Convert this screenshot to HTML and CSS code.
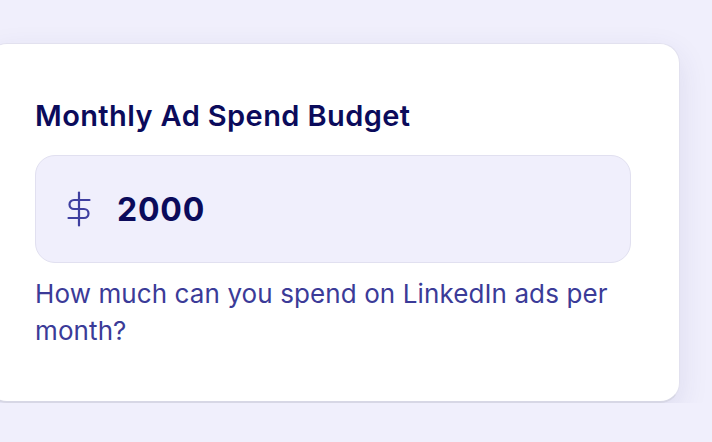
FILE: index.html
```html
<!DOCTYPE html>
<html lang="en">
<head>
  <meta charset="UTF-8" />
  <title>Campaign Setup | Budget</title>
  <meta name="viewport" content="width=device-width, initial-scale=1.0" />
  <link rel="stylesheet" href="styles.css">
</head>
<body>

  <div class="card">
    <label class="field-label" for="budget">Monthly Ad Spend Budget</label>
    <div class="money-input">
      <svg class="currency" width="24" height="36" viewBox="0 0 24 36" fill="none" stroke="currentColor" stroke-width="2.2" stroke-linecap="round" stroke-linejoin="round">
        <line x1="12" y1="1.5" x2="12" y2="34.5" />
        <path d="M22.5 9H7a4.5 4.5 0 0 0 0 9h10a4.5 4.5 0 0 1 0 9H1.5" />
      </svg>
      <input type="text" id="budget" value="2000" />
    </div>
    <p class="hint">How much can you spend on LinkedIn ads per month?</p>
  </div>

</body>
</html>
```

FILE: styles.css
```css
body {
  font-family: Inter, "Noto Sans", sans-serif;
  background: #f0effc;
  margin: 0;
  padding: 43px 0 0;
}
.card {
  background: white;
  width: 693px;
  margin-left: -13px;
  box-sizing: border-box;
  padding: 52px 48px 52px 47px;
  border: 1.5px solid #e2e1ef;
  border-bottom-width: 2px;
  border-bottom-color: #d7d7e5;
  border-radius: 20px;
  box-shadow: 0 10px 30px rgba(50, 50, 120, 0.1);
}
.field-label {
  display: block;
  font-size: 29px;
  font-weight: 600;
  letter-spacing: 0.4px;
  color: #0b0b5b;
  line-height: 40px;
}
.money-input {
  display: flex;
  align-items: center;
  gap: 26px;
  margin-top: 19px;
  height: 108px;
  box-sizing: border-box;
  padding: 0 31px;
  background: #f0effc;
  border: 1.5px solid #e1e0f0;
  border-radius: 20px;
}
.currency {
  color: #3f3fa0;
  flex: none;
}
.money-input input {
  flex: 1;
  border: 0;
  background: transparent;
  outline: none;
  padding: 0;
  font-family: inherit;
  font-size: 32px;
  font-weight: 700;
  letter-spacing: 0.8px;
  color: #0b0b5b;
}
.hint {
  margin: 12px 0 0;
  font-size: 26px;
  letter-spacing: 0.1px;
  line-height: 37px;
  color: #3b3b98;
}
```
